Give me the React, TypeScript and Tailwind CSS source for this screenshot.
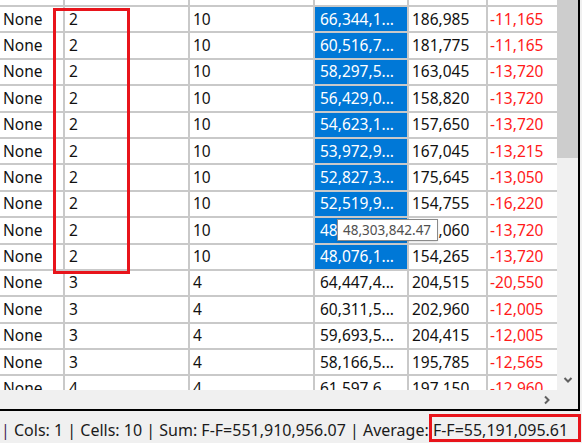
import React from 'react'

type Row = [string, string, string, string, string, string]

const rows: Row[] = [
  ['None', '2', '10', '67,391,2...', '174,765', '-11,205'],
  ['None', '2', '10', '66,344,1...', '186,985', '-11,165'],
  ['None', '2', '10', '60,516,7...', '181,775', '-11,165'],
  ['None', '2', '10', '58,297,5...', '163,045', '-13,720'],
  ['None', '2', '10', '56,429,0...', '158,820', '-13,720'],
  ['None', '2', '10', '54,623,1...', '157,650', '-13,720'],
  ['None', '2', '10', '53,972,9...', '167,045', '-13,215'],
  ['None', '2', '10', '52,827,3...', '175,645', '-13,050'],
  ['None', '2', '10', '52,519,9...', '154,755', '-16,220'],
  ['None', '2', '10', '48,303,8...', '161,060', '-13,720'],
  ['None', '2', '10', '48,076,1...', '154,265', '-13,720'],
  ['None', '3', '4', '64,447,4...', '204,515', '-20,550'],
  ['None', '3', '4', '60,311,5...', '202,960', '-12,005'],
  ['None', '3', '4', '59,693,5...', '204,415', '-12,005'],
  ['None', '3', '4', '58,166,5...', '195,785', '-12,565'],
  ['None', '4', '4', '61,597,6...', '197,150', '-12,960'],
]

function GridRow({ row, selected }: { row: Row; selected: boolean }) {
  return (
    <div className="flex h-[26.4px] shrink-0">
      <div className="w-[65px] border-r-2 border-b-2 border-[#c9c9c9] pl-[3px] flex items-center">{row[0]}</div>
      <div className="w-[125px] border-r-2 border-b-2 border-[#c9c9c9] pl-[4px] flex items-center">{row[1]}</div>
      <div className="w-[125px] border-r-2 border-b-2 border-[#c9c9c9] pl-[3px] flex items-center">{row[2]}</div>
      <div
        className={
          selected
            ? 'w-[94px] border-r-2 border-b-2 border-[#c9c9c9] pl-[5px] flex items-center bg-[#0078d7] text-white'
            : 'w-[94px] border-r-2 border-b-2 border-[#c9c9c9] pl-[5px] flex items-center'
        }
      >
        {row[3]}
      </div>
      <div className="w-[79px] border-r-2 border-b-2 border-[#c9c9c9] pl-[3px] flex items-center">{row[4]}</div>
      <div className="w-[69px] border-b-2 border-[#c9c9c9] pl-[2px] flex items-center text-[#ff1a1a]">{row[5]}</div>
    </div>
  )
}

export default function App() {
  return (
    <div className="relative w-[582px] h-[443px] overflow-hidden bg-[#f0f0f0] text-[#111] font-['Noto_Sans',sans-serif] text-[15.5px]">
      {/* Grid window */}
      <div className="flex w-[580px] h-[411px] border-r-2 border-b-2 border-black">
        <div className="flex flex-col w-[557px]">
          <div className="h-[390px] overflow-hidden bg-white">
            <div className="flex flex-col mt-[-19.4px]">
              {rows.map((r, i) => (
                <GridRow key={i} row={r} selected={i >= 1 && i <= 10} />
              ))}
            </div>
          </div>
          {/* Horizontal scrollbar */}
          <div className="h-[19px] bg-[#f0f0f0] flex items-center justify-end pr-[6px]">
            <svg width="8" height="10" viewBox="0 0 8 10" className="text-[#606060]">
              <path d="M2 1.5 L5.5 5 L2 8.5" fill="none" stroke="currentColor" strokeWidth="2" />
            </svg>
          </div>
        </div>
        {/* Vertical scrollbar */}
        <div className="w-[21px] flex flex-col bg-[#f0f0f0]">
          <div className="h-[158px] bg-[#cdcdcd]" />
          <div className="flex-1 flex items-end justify-center pb-[25px]">
            <svg width="10" height="8" viewBox="0 0 10 8" className="text-[#606060]">
              <path d="M1.5 2 L5 5.5 L8.5 2" fill="none" stroke="currentColor" strokeWidth="2" />
            </svg>
          </div>
        </div>
      </div>

      {/* Status bar */}
      <div className="h-[32px] flex items-center pl-[1px] pt-[6px] whitespace-nowrap text-[#1a1a1a] text-[16px]">
        <span className="text-[#4b2a5a]">|</span>
        <span>&nbsp;Cols: 1 | Cells: 10 | Sum: F-F=551,910,956.07 | Average:&nbsp;</span>
        <span>F-F=55,191,095.61</span>
      </div>

      {/* Red highlight boxes */}
      <div className="absolute left-[53px] top-[8px] w-[77px] h-[266px] border-[3px] border-[#e8141b]" />
      <div className="absolute left-[429px] top-[414px] w-[152px] h-[28px] border-[3px] border-[#e8141b]" />

      {/* Tooltip */}
      <div className="absolute left-[337px] top-[219px] w-[101px] h-[22px] bg-white border border-[#8a8a8a] text-[13.5px] text-[#505050] flex items-center pl-[5px] shadow-sm">
        48,303,842.47
      </div>
    </div>
  )
}
